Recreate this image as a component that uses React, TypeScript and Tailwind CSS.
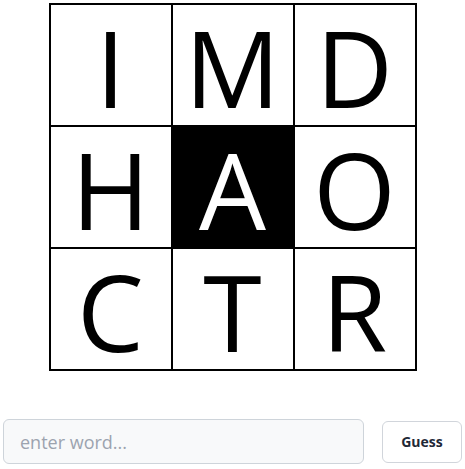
import React, { useState } from 'react';

const letters = ['I', 'M', 'D', 'H', 'A', 'O', 'C', 'T', 'R'];

export default function App() {
  const [word, setWord] = useState('');

  return (
    <div className="w-[465px] h-[469px] bg-white flex flex-col items-center" style={{ fontFamily: '"Open Sans", "Noto Sans", sans-serif' }}>
      <div className="mt-[3px] grid grid-cols-3 gap-[2px] bg-black p-[2px]">
        {letters.map((l, i) => (
          <div
            key={i}
            className={`w-[120px] h-[120px] flex items-center justify-center ${
              i === 4 ? 'bg-black text-white' : 'bg-white text-black'
            }`}
          >
            <span className="block text-[106px] leading-[78px] pt-[4px]">{l}</span>
          </div>
        ))}
      </div>

      <div className="mt-[48px] w-full flex items-center gap-[18px] px-[3px]">
        <input
          value={word}
          onChange={e => setWord(e.target.value)}
          placeholder="enter word..."
          className="flex-1 h-[45px] rounded-md border border-[#ced4da] bg-[#f8f9fa] px-[16px] text-[18px] text-gray-800 placeholder:text-[#9ca3af] outline-none"
        />
        <button className="w-[80px] h-[42px] rounded-md border border-[#d1d5db] bg-white text-[14px] font-bold text-[#1f2937]">
          Guess
        </button>
      </div>
    </div>
  );
}
